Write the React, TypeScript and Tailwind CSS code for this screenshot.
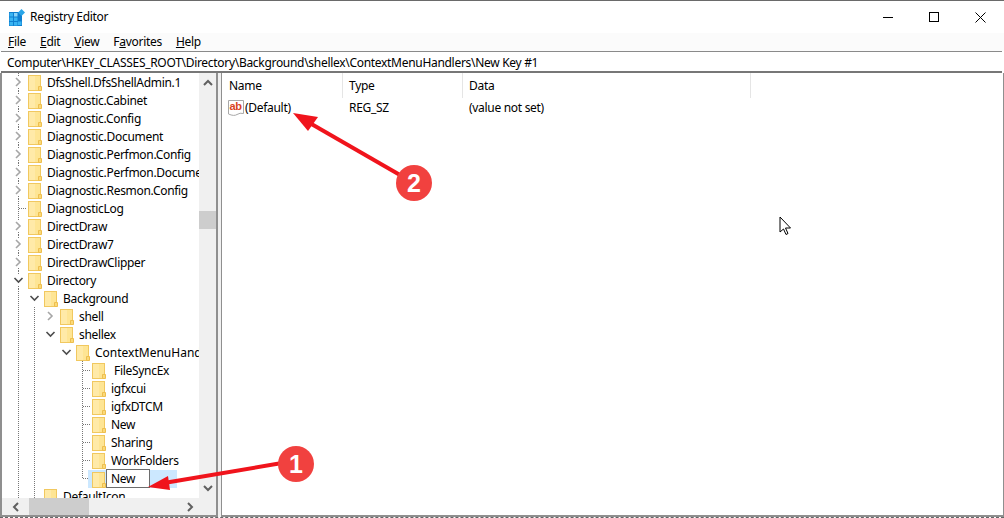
import React from 'react';

type TreeRow = {
  name: string;
  depth: number;
  node: 'closed' | 'open' | 'leaf' | 'line';
  guides: number[];
  textClass?: string;
  last?: boolean;
  editing?: boolean;
};

const rows: TreeRow[] = [
  { name: 'DfsShell.DfsShellAdmin.1', depth: 0, node: 'closed', guides: [] },
  { name: 'Diagnostic.Cabinet', depth: 0, node: 'closed', guides: [] },
  { name: 'Diagnostic.Config', depth: 0, node: 'closed', guides: [] },
  { name: 'Diagnostic.Document', depth: 0, node: 'closed', guides: [] },
  { name: 'Diagnostic.Perfmon.Config', depth: 0, node: 'closed', guides: [] },
  { name: 'Diagnostic.Perfmon.Document', depth: 0, node: 'closed', guides: [] },
  { name: 'Diagnostic.Resmon.Config', depth: 0, node: 'closed', guides: [] },
  { name: 'DiagnosticLog', depth: 0, node: 'leaf', guides: [] },
  { name: 'DirectDraw', depth: 0, node: 'closed', guides: [] },
  { name: 'DirectDraw7', depth: 0, node: 'closed', guides: [] },
  { name: 'DirectDrawClipper', depth: 0, node: 'closed', guides: [] },
  { name: 'Directory', depth: 0, node: 'open', guides: [] },
  { name: 'Background', depth: 1, node: 'open', guides: [0] },
  { name: 'shell', depth: 2, node: 'closed', guides: [0, 1] },
  { name: 'shellex', depth: 2, node: 'open', guides: [0, 1] },
  { name: 'ContextMenuHandlers', depth: 3, node: 'open', guides: [0, 1], textClass: 'ml-[5px] tracking-normal' },
  { name: 'FileSyncEx', depth: 4, node: 'leaf', guides: [0, 1], textClass: 'ml-[8px]' },
  { name: 'igfxcui', depth: 4, node: 'leaf', guides: [0, 1] },
  { name: 'igfxDTCM', depth: 4, node: 'leaf', guides: [0, 1] },
  { name: 'New', depth: 4, node: 'leaf', guides: [0, 1] },
  { name: 'Sharing', depth: 4, node: 'leaf', guides: [0, 1] },
  { name: 'WorkFolders', depth: 4, node: 'leaf', guides: [0, 1] },
  { name: 'New', depth: 4, node: 'leaf', guides: [0, 1], last: true, editing: true },
  { name: 'DefaultIcon', depth: 1, node: 'line', guides: [0] },
];

function Guide({ on }: { on: boolean }) {
  return (
    <svg width="16" height="18" className="shrink-0">
      {on && <line x1="8.5" y1="0" x2="8.5" y2="18" stroke="#777" strokeDasharray="1 1" />}
    </svg>
  );
}

function Node({ node, last, depth }: { node: TreeRow['node']; last?: boolean; depth: number }) {
  return (
    <svg width="16" height="18" className="shrink-0">
      {depth === 0 && node !== 'leaf' && (
        <>
          <line x1="8.5" y1="0" x2="8.5" y2="3" stroke="#777" strokeDasharray="1 1" />
          <line x1="8.5" y1="15" x2="8.5" y2="18" stroke="#777" strokeDasharray="1 1" />
        </>
      )}
      {node === 'leaf' && (
        <>
          <line x1="8.5" y1="0" x2="8.5" y2={last ? 9 : 18} stroke="#777" strokeDasharray="1 1" />
          <line x1="9" y1="9.5" x2="16" y2="9.5" stroke="#777" strokeDasharray="1 1" />
        </>
      )}
      {node === 'line' && <line x1="8.5" y1="0" x2="8.5" y2="18" stroke="#777" strokeDasharray="1 1" />}
      {node === 'closed' && <path d="M6 5 L10 9 L6 13" fill="none" stroke="#a6a6a6" strokeWidth="1.6" />}
      {node === 'open' && <path d="M4.5 7 L8.5 11 L12.5 7" fill="none" stroke="#4d4d4d" strokeWidth="1.6" />}
    </svg>
  );
}

function Folder() {
  return (
    <svg width="14" height="18" viewBox="0 0 14 18" className="shrink-0">
      <rect x="0.5" y="2.5" width="12" height="15" fill="#fee594" stroke="#f1c85f" />
      <rect x="1" y="3" width="6" height="14" fill="#ffeaa8" />
      <path d="M10.5 17.5 V13.5 H13.5 V17.5 Z" fill="#fbd978" stroke="#eebf4e" />
    </svg>
  );
}

function Row({ row }: { row: TreeRow }) {
  return (
    <div className="flex h-[18px] shrink-0 items-center pl-2 whitespace-nowrap">
      {Array.from({ length: row.depth }).map((_, i) => (
        <Guide key={i} on={row.guides.includes(i)} />
      ))}
      <Node node={row.node} last={row.last} depth={row.depth} />
      {row.editing ? (
        <div className="mt-[2px] -ml-[2px] flex h-[18px] w-[89px] items-center bg-[#cce8ff] pl-1">
          <Folder />
          <div className="h-[19px] w-[44px] -translate-y-px border border-[#6d6d6d] bg-white pl-1 leading-[17px]">New</div>
        </div>
      ) : (
        <>
          <span className="ml-[2px]">
            <Folder />
          </span>
          <span className={`translate-y-px ${row.textClass ?? 'ml-[5px]'}`}>{row.name}</span>
        </>
      )}
    </div>
  );
}

function ScrollChevron({ d }: { d: string }) {
  return (
    <svg width="12" height="12" viewBox="0 0 12 12">
      <path d={d} fill="none" stroke="#606060" strokeWidth="2" />
    </svg>
  );
}

function AppIcon() {
  return (
    <svg width="17" height="17" viewBox="0 0 17 17" className="shrink-0">
      <rect x="0" y="3" width="13" height="14" fill="#0f7fd0" />
      {[3.5, 8].map((x) =>
        [4, 8.5, 13].map((y) => <rect key={`${x}-${y}`} x={x - 3} y={y} width="3.5" height="3.5" fill={y === 4 && x === 8 ? '#8ad4f8' : '#39b4f2'} />),
      )}
      <rect x="9" y="12.5" width="3.5" height="3.5" fill="#39b4f2" />
      <path d="M12.5 0 L16 3.5 L12.5 7 L9 3.5 Z" fill="#2aa5e8" />
    </svg>
  );
}

function ValueIcon() {
  return (
    <svg width="16" height="18" viewBox="0 0 16 18" className="shrink-0">
      <path d="M0.5 1.5 H15.5 V14.5 Q12 13.5 9 15.5 T0.5 15 Z" fill="#fff" stroke="#a8a8a8" />
      <text x="1.5" y="11" fontSize="11" fontWeight="700" fill="#d8431f" fontFamily="'Liberation Sans', sans-serif">
        ab
      </text>
    </svg>
  );
}

function Callouts() {
  return (
    <>
      <svg width="1004" height="518" className="pointer-events-none absolute -top-px left-0">
        <line x1="282" y1="463" x2="164" y2="483" stroke="#f0141c" strokeWidth="4" />
        <path d="M148 487 L168 476 L170 490 Z" fill="#f0141c" />
        <line x1="400" y1="175" x2="308" y2="122" stroke="#f0141c" strokeWidth="4" />
        <path d="M293 113 L318 117 L308 131 Z" fill="#f0141c" />
        <circle cx="296" cy="464" r="18" fill="#f1413f" />
        <circle cx="414" cy="183" r="18" fill="#f1413f" />
        <path d="M780 217 V232 L783.5 229 L786 234.5 L788 233.5 L785.5 228 H790.5 Z" fill="#fff" stroke="#000" strokeWidth="1" />
      </svg>
      <span className="absolute top-[448px] left-[278px] w-9 text-center font-['Liberation_Sans',sans-serif] text-[25px] leading-[30px] font-bold tracking-normal text-white">
        1
      </span>
      <span className="absolute top-[167px] left-[396px] w-9 text-center font-['Liberation_Sans',sans-serif] text-[25px] leading-[30px] font-bold tracking-normal text-white">
        2
      </span>
    </>
  );
}

export default function App() {
  return (
    <div className="relative flex h-[518px] w-[1004px] flex-col overflow-hidden border-t border-b border-t-[#6a6a6a] border-b-[#666] border-dashed bg-white font-['Noto_Sans',sans-serif] text-[12px] tracking-[-0.3px] text-black [border-top-style:solid]">
      <div className="flex h-[32px] shrink-0 items-center pl-[9px]">
        <AppIcon />
        <span className="ml-1">Registry Editor</span>
        <div className="ml-auto flex h-full items-center pr-px">
          <div className="flex h-full w-[46px] items-center justify-center">
            <div className="h-px w-[10px] bg-black" />
          </div>
          <div className="flex h-full w-[46px] items-center justify-center">
            <div className="h-[10px] w-[10px] border border-black" />
          </div>
          <div className="flex h-full w-[46px] items-center justify-center">
            <svg width="11" height="11" viewBox="0 0 11 11">
              <path d="M0.5 0.5 L10.5 10.5 M10.5 0.5 L0.5 10.5" stroke="#000" strokeWidth="1" />
            </svg>
          </div>
        </div>
      </div>

      <div className="flex h-[18px] shrink-0 items-center gap-[14px] bg-[#fbfbfb] pl-2">
        <span><span className="underline">F</span>ile</span>
        <span><span className="underline">E</span>dit</span>
        <span><span className="underline">V</span>iew</span>
        <span>F<span className="underline">a</span>vorites</span>
        <span><span className="underline">H</span>elp</span>
      </div>

      <div className="mx-px mr-[2px] flex h-[22px] shrink-0 items-center border-t border-b-2 border-t-[#8a8a8a] border-b-[#777] bg-white pl-[6px]">
        <span className="translate-y-px">Computer\HKEY_CLASSES_ROOT\Directory\Background\shellex\ContextMenuHandlers\New Key #1</span>
      </div>

      <div className="flex min-h-0 flex-1 bg-[#f0f0f0]">
        <div className="flex w-[218px] shrink-0 flex-col border-r-2 border-b-2 border-l-2 border-[#8f8f8f] bg-white">
          <div className="flex min-h-0 flex-1">
            <div className="min-w-0 flex-1 overflow-hidden">
              {rows.map((row, i) => (
                <Row key={i} row={row} />
              ))}
            </div>
            <div className="flex w-[17px] shrink-0 flex-col items-center bg-[#f0f0f0] pt-1 pb-1">
              <ScrollChevron d="M2 8 L6 4 L10 8" />
              <div className="mt-[122px] h-[18px] w-full bg-[#cdcdcd]" />
              <div className="flex-1" />
              <ScrollChevron d="M2 4 L6 8 L10 4" />
            </div>
          </div>
          <div className="flex h-[17px] shrink-0 items-center bg-[#f0f0f0]">
            <div className="flex w-[27px] justify-center">
              <ScrollChevron d="M8 2 L4 6 L8 10" />
            </div>
            <div className="h-full w-[60px] bg-[#cdcdcd]" />
            <div className="ml-[95px] flex w-[12px] justify-center">
              <ScrollChevron d="M4 2 L8 6 L4 10" />
            </div>
          </div>
        </div>

        <div className="ml-[3px] min-w-0 flex-1 border-b-2 border-l border-[#8f8f8f] bg-white pr-px">
          <div className="flex h-[25px] items-center">
            <div className="h-full w-[121px] border-r border-[#e5e5e5] pl-[7px] leading-[25px]">Name</div>
            <div className="h-full w-[120px] border-r border-[#e5e5e5] pl-[6px] leading-[25px]">Type</div>
            <div className="h-full w-[288px] border-r border-[#e5e5e5] pl-[6px] leading-[25px]">Data</div>
          </div>
          <div className="mt-px flex h-[18px] items-center">
            <div className="flex w-[121px] items-center pl-[6px]">
              <ValueIcon />
              <span className="ml-[1px]">(Default)</span>
            </div>
            <div className="w-[120px] pl-[6px]">REG_SZ</div>
            <div className="pl-[6px]">(value not set)</div>
          </div>
        </div>
        <div className="w-px shrink-0 bg-[#8f8f8f]" />
      </div>

      <Callouts />
    </div>
  );
}
